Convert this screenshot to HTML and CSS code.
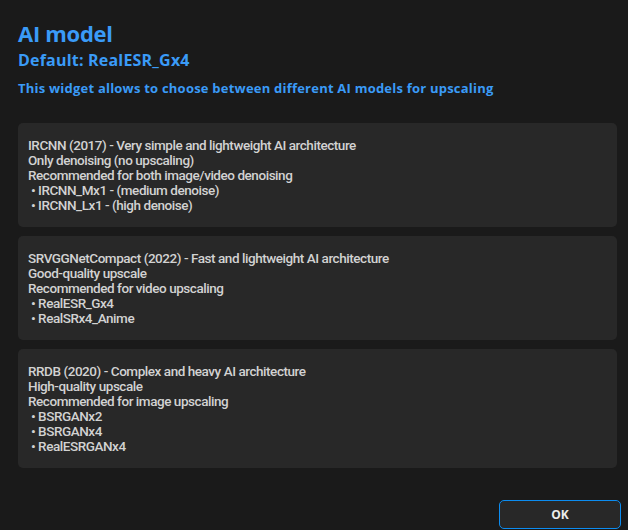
FILE: index.html
```html
<!DOCTYPE html>
<html>
<head>
<meta charset="utf-8">
<link rel="stylesheet" href="styles.css">
</head>
<body>
<div class="page">
  <header class="head">
    <h1 class="title">AI model</h1>
    <h2 class="subtitle">Default: RealESR_Gx4</h2>
    <p class="desc">This widget allows to choose between different AI models for upscaling</p>
  </header>
  <div class="cards">
    <div class="card">
      <div>IRCNN (2017) - Very simple and lightweight AI architecture</div>
      <div>Only denoising (no upscaling)</div>
      <div>Recommended for both image/video denoising</div>
      <div>&nbsp;• IRCNN_Mx1 - (medium denoise)</div>
      <div>&nbsp;• IRCNN_Lx1 - (high denoise)</div>
    </div>
    <div class="card">
      <div>SRVGGNetCompact (2022) - Fast and lightweight AI architecture</div>
      <div>Good-quality upscale</div>
      <div>Recommended for video upscaling</div>
      <div>&nbsp;• RealESR_Gx4</div>
      <div>&nbsp;• RealSRx4_Anime</div>
    </div>
    <div class="card">
      <div>RRDB (2020) - Complex and heavy AI architecture</div>
      <div>High-quality upscale</div>
      <div>Recommended for image upscaling</div>
      <div>&nbsp;• BSRGANx2</div>
      <div>&nbsp;• BSRGANx4</div>
      <div>&nbsp;• RealESRGANx4</div>
    </div>
  </div>
  <div class="footer">
    <button class="ok">OK</button>
  </div>
</div>
</body>
</html>
```
FILE: styles.css
```css
html, body {
  margin: 0;
  padding: 0;
  background: #1a1a1a;
  width: 628px;
  height: 530px;
  overflow: hidden;
}
.page {
  padding: 0 7px 0 18px;
  display: flex;
  flex-direction: column;
  height: 530px;
  box-sizing: border-box;
}
.head {
  color: #3a9bf7;
  font-family: "Open Sans", "Noto Sans", sans-serif;
}
.title {
  margin: 17px 0 0 0;
  font-size: 22px;
  font-weight: 700;
  line-height: 32px;
  letter-spacing: -0.3px;
}
.subtitle {
  margin: 0;
  font-size: 16px;
  font-weight: 700;
  line-height: 22px;
  letter-spacing: 0.2px;
}
.desc {
  margin: 8px 0 0 0;
  font-size: 13px;
  font-weight: 700;
  line-height: 18px;
  letter-spacing: 0.22px;
}
.cards {
  margin-top: 26px;
  margin-right: 4px;
  display: flex;
  flex-direction: column;
  gap: 9px;
}
.card {
  background: #282828;
  border-radius: 5px;
  padding: 15px 10px 14px 10px;
  color: #d2d2d2;
  font-family: Roboto, "Noto Sans", sans-serif;
  font-weight: 500;
  font-size: 13.5px;
  line-height: 15px;
  letter-spacing: -0.45px;
}
.footer {
  margin-top: auto;
  display: flex;
  justify-content: flex-end;
  padding-bottom: 1px;
}
.ok {
  width: 122px;
  height: 29px;
  background: #282828;
  border: 1px solid #0c8cf0;
  border-radius: 5px;
  color: #ececec;
  font-family: "Open Sans", sans-serif;
  font-weight: 700;
  font-size: 12px;
}
```
